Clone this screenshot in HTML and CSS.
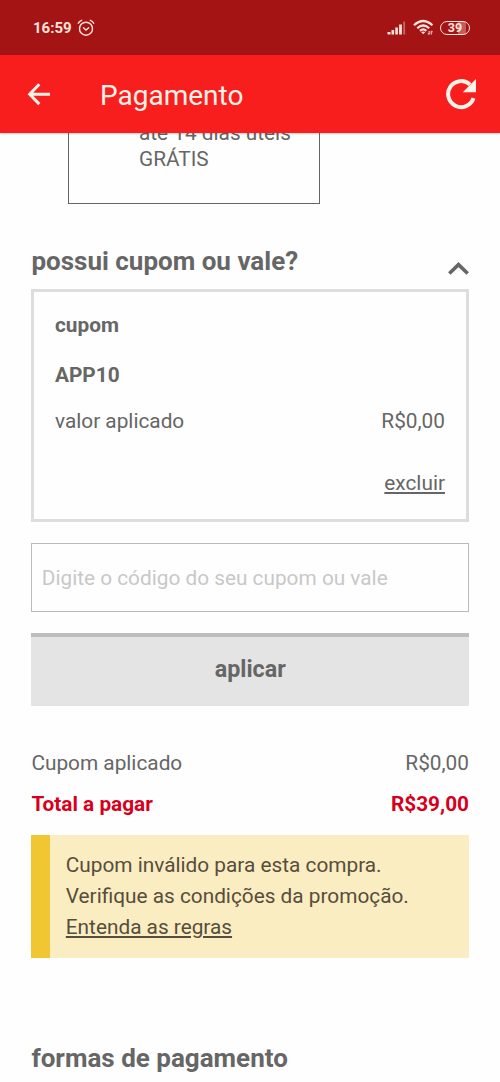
FILE: index.html
```html
<!DOCTYPE html>
<html lang="pt-BR">
<head>
<meta charset="utf-8">
<title>Pagamento</title>
<link rel="stylesheet" href="styles.css">
</head>
<body>
<div class="status">
  <span class="clock">16:59</span>
  <svg class="alarm" width="18" height="18" viewBox="0 0 18 18" fill="none" stroke="currentColor" stroke-width="1.4" stroke-linecap="round"><circle cx="9" cy="9.7" r="6.5"/><path d="M6.5 8.7 9 11l2.700-2.300M1.300 4.300Q2.300 2 4.700 1.300M16.700 4.300Q15.700 2 13.300 1.300"/></svg>
  <svg class="signal" width="20" height="14" viewBox="0 0 20 14" fill="currentColor"><path d="M.5 11h3v2.500H1.200Q0 13.500.5 11zM4.500 9h2.600v4.500H4.500zM8.300 6.500h2.600v7H8.300zM12.100 3.500h2.800v10h-2.800z"/><path opacity=".4" d="M16.300.5h1.800v13h-1.800z"/></svg>
  <svg class="wifi" width="22" height="17" viewBox="0 0 22 17" fill="none" stroke="currentColor" stroke-width="2.200"><path d="M1 6.300Q10 -2.300 19.500 6.300M4.200 9.200Q10.200 3.800 16.200 9.200M7 11.900Q10.200 9 13.300 11.900"/><path fill="currentColor" stroke="none" d="M8.200 13.200Q10.200 11.800 12.200 13.200L10.200 15.300z"/><path stroke-width="1.300" opacity=".75" d="M16.200 12v3.500M15 14.200l1.200 1.300M18.300 15.500V12M18.300 12l1.200 1.200"/></svg>
  <span class="battery">39</span>
</div>
<header class="appbar">
  <svg class="back" width="24" height="24" viewBox="0 0 24 24" fill="none" stroke="currentColor" stroke-width="3"><path d="M12.300 2.300 2.700 12.200l9.600 9.900M2.700 12.200H23"/></svg>
  <h1 class="title">Pagamento</h1>
  <svg class="reload" width="32" height="32" viewBox="0 0 32 32"><path fill="none" stroke="currentColor" stroke-width="4" d="M28.500 20.200A13 13 0 1 1 25 6.600"/><path fill="currentColor" d="M31 1v13.200H17.800z"/></svg>
</header>
<main class="page">
  <div class="shipping"><span>até 14 dias úteis</span><span>GRÁTIS</span></div>
  <div class="section-head">
    <h2 class="heading">possui cupom ou vale?</h2>
    <svg class="chevron" width="22" height="14" viewBox="0 0 22 14" fill="none" stroke="currentColor" stroke-width="3.600"><path d="M2.300 12.500 11.500 3.600l9.200 8.900"/></svg>
  </div>
  <section class="coupon">
    <strong class="coupon-label">cupom</strong>
    <strong class="coupon-code">APP10</strong>
    <div class="row"><span>valor aplicado</span><span>R$0,00</span></div>
    <a class="remove">excluir</a>
  </section>
  <input class="code" aria-label="Código" placeholder="Digite o código do seu cupom ou vale">
  <button class="apply">aplicar</button>
  <div class="row summary"><span>Cupom aplicado</span><span>R$0,00</span></div>
  <div class="row total"><span>Total a pagar</span><span>R$39,00</span></div>
  <aside class="notice">
    <span>Cupom inválido para esta compra.</span>
    <span>Verifique as condições da promoção.</span>
    <a class="rules">Entenda as regras</a>
  </aside>
  <h2 class="heading methods">formas de pagamento</h2>
</main>
</body>
</html>
```
FILE: styles.css
```css
* { box-sizing: border-box; }
body { margin: 0; height: 1082px; overflow: hidden; background: #fefefe; color: #666; font: 20.8px/30px Roboto, sans-serif; display: flex; flex-direction: column; }
svg { display: block; flex: none; }
h1, h2 { margin: 0; }
.status { height: 55px; flex: none; background: #a51414; color: #ffe4dc; display: flex; align-items: center; padding: 0 30px 0 33px; }
.clock { font-size: 15px; font-weight: 700; line-height: 20px; }
.alarm { margin-left: 5px; }
.signal { margin-left: auto; }
.wifi { margin-left: 6px; }
.battery { margin-left: 5px; width: 30px; height: 14px; border: 1.5px solid; border-radius: 7px; font-size: 12.5px; font-weight: 700; line-height: 12px; text-align: center; background: linear-gradient(90deg, transparent 60%, #c65c5c 60%, #c65c5c 88%, transparent 88%); }
.appbar { height: 78px; flex: none; background: #f91e1e; color: #fff3e8; display: flex; align-items: center; padding: 0 23px 0 27px; position: relative; box-shadow: 0 1px 2px #0003; }
.title { margin: 3px auto 0 49px; font-size: 28px; font-weight: 400; line-height: 36px; }
.page { padding: 0 31px 0 31.4px; display: flex; flex-direction: column; }
.shipping { margin: -20px 0 0 36.6px; width: 252px; height: 91px; border: 1.6px solid #666; border-top: 0; padding: 7px 0 0 70px; line-height: 26px; display: flex; flex-direction: column; }
.section-head { display: flex; justify-content: space-between; height: 85px; padding-top: 39px; }
.heading { font-size: 26px; font-weight: 700; line-height: 36px; }
.chevron { margin-top: 18px; }
.coupon { height: 233px; border: 3px solid #ddd; padding: 18px 21px 18px 20.6px; display: flex; flex-direction: column; }
.coupon-label { margin-bottom: 20px; }
.coupon-code { margin-bottom: 16px; }
.row { display: flex; justify-content: space-between; }
.remove { align-self: flex-end; margin-top: 32px; text-decoration: underline; }
.code { margin-top: 21px; height: 69px; border: 1.5px solid #bbb; background: #fefefe; padding: 0 9.4px; font: inherit; }
.code::placeholder { color: #c8c8c8; opacity: 1; }
.apply { margin-top: 21px; height: 73px; border: 0; border-top: 4px solid #bdbdbd; background: #e4e4e4; color: #666; font: 700 23.3px/30px Roboto, sans-serif; padding: 0 0 5px; }
.summary { margin-top: 42px; }
.total { margin-top: 11px; color: #d6001c; font-weight: 700; }
.notice { margin-top: 16px; height: 123px; border-left: 19px solid #f0c733; background: #faedc1; color: #574d3c; padding: 15px 15px 15px 15.4px; line-height: 31px; display: flex; flex-direction: column; align-items: flex-start; }
.rules { text-decoration: underline; }
.methods { margin-top: 82px; }
```
